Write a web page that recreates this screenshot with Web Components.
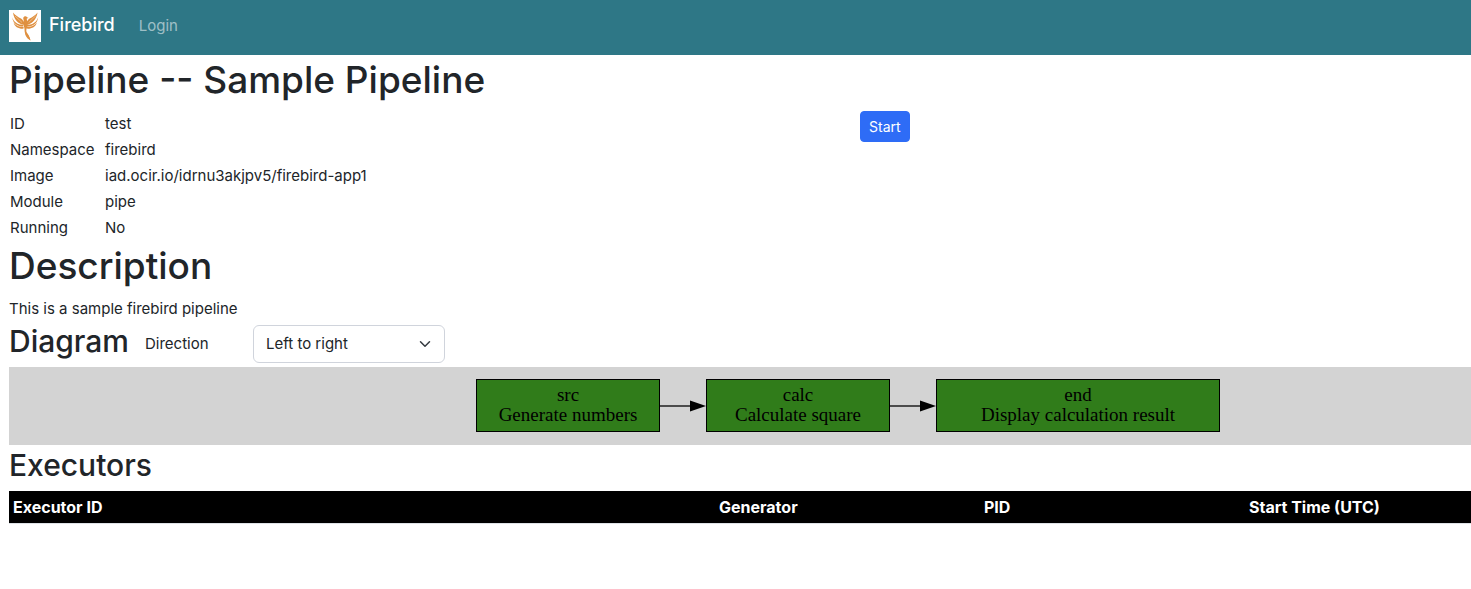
<!DOCTYPE html>
<html lang="en">
<head>
<meta charset="utf-8">
<meta name="viewport" content="width=device-width, initial-scale=1">
<title>Firebird</title>
<style>
  body {
    margin: 0;
    background: #fff;
    color: #212529;
    font-family: Inter, Roboto, "Liberation Sans", sans-serif;
    font-size: 15px;
    line-height: 24px;
  }
</style>
</head>
<body>
<fb-navbar brand="Firebird">
  <fb-nav-link href="#login">Login</fb-nav-link>
</fb-navbar>
<fb-pipeline>
  <fb-heading>Pipeline -- Sample Pipeline</fb-heading>
  <fb-details></fb-details>
  <fb-heading>Description</fb-heading>
  <fb-text>This is a sample firebird pipeline</fb-text>
  <fb-diagram-header></fb-diagram-header>
  <fb-diagram>
    <fb-node label="src" detail="Generate numbers"></fb-node>
    <fb-edge></fb-edge>
    <fb-node label="calc" detail="Calculate square"></fb-node>
    <fb-edge></fb-edge>
    <fb-node wide label="end" detail="Display calculation result"></fb-node>
  </fb-diagram>
  <fb-heading level="2">Executors</fb-heading>
  <fb-executors></fb-executors>
</fb-pipeline>

<script>
function render(host, styles, content) {
  const root = host.attachShadow({ mode: "open" });
  root.innerHTML = `<style>${styles}</style>${content}`;
  return root;
}

class FbNavbar extends HTMLElement {
  connectedCallback() {
    render(this, `
      :host { display: block; background: #2e7786; }
      nav { display: flex; align-items: center; gap: 24px; min-height: 52px; padding: 0 9px 3px; }
      .brand { display: flex; gap: 8px; color: #fff; font-size: 18px; font-weight: 500; line-height: 30px; text-decoration: none; }
      .logo { display: block; width: 32px; height: 32px; }
    `, `
      <nav>
        <a class="brand" href="#home">
          <svg class="logo" viewBox="0 0 32 32" aria-hidden="true">
            <path fill="#fff" d="M0 0h32v32H0z"/>
            <g fill="#df9040">
              <path d="M15 14.800C9 14 5 9.500 4 2.400c2.200 3.200 5.400 4.400 8 6.200 1.800 1.300 2.800 2.900 3.400 4.400z"/>
              <path d="M17.600 14.800C23 14 27.400 9.500 28.600 2.400c-2.200 3.200-5.400 4.400-8 6.200-1.800 1.300-2.800 2.900-3.400 4.400z"/>
              <path d="M3.200 7.200c1.600 4.900 5.400 7.400 11.200 7.800v1.600C8.500 16.600 4 13.500 3.200 7.200z"/>
              <path d="M29.200 7.200c-1.600 4.900-5.400 7.400-11.200 7.800v1.600c5.900 0 10.400-3.100 11.200-9.400z"/>
              <path d="M4.600 12.400c2.200 3.200 5.600 4.500 10 4.500v1.700c-5 .3-8.900-1.800-10-6.200z"/>
              <path d="M27.800 12.400c-2.200 3.200-5.600 4.500-10 4.500v1.700c5 .3 8.900-1.800 10-6.200z"/>
              <path d="M14.200 7.900c.6-1.900 3-2.400 3.900-.6l1.500.8-1.800.5c-.2 1.800.9 3.600.9 6 0 3-1.700 4.400-1.400 6.400.4 2.700 3 4.600 4.200 9.500-1.600-2.500-4.500-3.600-5.400-7-.9-2.800-.2-4.600-1-6.600-1.200-3 .3-5.400-.9-9z"/>
              <path d="M16.200 21.500c2.700 1.700 4.300 4.600 5.300 9-3-1.500-5.700-4.600-5.300-9z"/>
            </g>
            <path fill="none" stroke="#fff" stroke-opacity=".7" stroke-width=".5" d="M6 6l7 6.500M26.600 6l-7 6.500M5.500 10.500l5.500 4M27 10.500l-5.500 4"/>
          </svg>
          <span>${this.getAttribute("brand") ?? ""}</span>
        </a>
        <slot></slot>
      </nav>
    `);
  }
}

class FbNavLink extends HTMLElement {
  connectedCallback() {
    render(this, `
      :host { display: block; }
      a { color: rgba(255, 255, 255, 0.55); text-decoration: none; }
    `, `<a href="${this.getAttribute("href") ?? "#"}"><slot></slot></a>`);
  }
}

class FbPipeline extends HTMLElement {
  connectedCallback() {
    render(this, `
      :host { display: block; padding: 1px 0 0 9px; }
    `, `<main><slot></slot></main>`);
  }
}

class FbHeading extends HTMLElement {
  connectedCallback() {
    const tag = this.getAttribute("level") === "2" ? "h2" : "h1";
    render(this, `
      :host { display: block; }
      h1, h2 { margin: 0; font-weight: 500; }
      h1 { font-size: 37px; line-height: 48px; padding-bottom: 7px; }
      h2 { font-size: 30px; line-height: 38px; padding: 1px 0 7px; }
    `, `<${tag}><slot></slot></${tag}>`);
  }
}

class FbText extends HTMLElement {
  connectedCallback() {
    render(this, `
      :host { display: block; }
      p { margin: 0; }
    `, `<p><slot></slot></p>`);
  }
}

const details = [
  ["ID", "test"],
  ["Namespace", "firebird"],
  ["Image", "iad.ocir.io/idrnu3akjpv5/firebird-app1"],
  ["Module", "pipe"],
  ["Running", "No"]
];

class FbDetails extends HTMLElement {
  connectedCallback() {
    const rows = details
      .map(([name, value]) => `<tr><th scope="row">${name}</th><td>${value}</td></tr>`)
      .join("");

    render(this, `
      :host { display: grid; grid-template-columns: 7fr 5fr; align-items: start; padding: 0 3px 1px 0; }
      table { border-collapse: collapse; justify-self: start; }
      th, td { padding: 1px; text-align: left; font-weight: 400; }
      th { min-width: 93px; }
      button {
        justify-self: start;
        padding: 4px 8px;
        border: 1px solid #2e6cf6;
        border-radius: 4px;
        background: #2e6cf6;
        color: #fff;
        font: inherit;
        font-size: 14px;
        line-height: 21px;
      }
    `, `
      <table><tbody>${rows}</tbody></table>
      <button type="button">Start</button>
    `);
  }
}

class FbDiagramHeader extends HTMLElement {
  connectedCallback() {
    render(this, `
      :host { display: flex; align-items: center; padding: 4px 0; }
      h2 { margin: 0; padding-bottom: 6px; font-size: 30px; line-height: 32px; font-weight: 500; }
      label { width: 108px; margin-left: 16px; }
      .select { display: grid; align-items: center; width: 192px; }
      select, svg { grid-area: 1 / 1; }
      select {
        appearance: none;
        width: 100%;
        padding: 6px 36px 6px 12px;
        border: 1px solid #d0d4dc;
        border-radius: 6px;
        background: #fff;
        color: inherit;
        font: inherit;
        line-height: 24px;
      }
      svg { justify-self: end; width: 16px; height: 12px; margin-right: 12px; pointer-events: none; }
    `, `
      <h2>Diagram</h2>
      <label for="direction">Direction</label>
      <div class="select">
        <select id="direction">
          <option>Left to right</option>
          <option>Top to bottom</option>
        </select>
        <svg viewBox="0 0 16 16" aria-hidden="true">
          <path fill="none" stroke="#343a40" stroke-width="2" stroke-linecap="round" stroke-linejoin="round" d="m2 5 6 6 6-6"/>
        </svg>
      </div>
    `);
  }
}

class FbDiagram extends HTMLElement {
  connectedCallback() {
    render(this, `
      :host {
        display: flex;
        align-items: center;
        justify-content: center;
        padding: 12px 0 13px 216px;
        background: #d3d3d3;
      }
    `, `<slot></slot>`);
  }
}

class FbNode extends HTMLElement {
  connectedCallback() {
    render(this, `
      :host {
        display: block;
        box-sizing: border-box;
        width: 184px;
        padding: 5px 0 6px;
        border: 1px solid #000;
        background: #307c1a;
        color: #000;
        font-family: "Liberation Serif", serif;
        font-size: 19px;
        line-height: 20px;
        text-align: center;
      }
      :host([wide]) { width: 284px; }
    `, `
      <div>${this.getAttribute("label") ?? ""}</div>
      <div>${this.getAttribute("detail") ?? ""}</div>
    `);
  }
}

class FbEdge extends HTMLElement {
  connectedCallback() {
    render(this, `
      :host { display: block; }
      svg { display: block; width: 46px; height: 12px; }
    `, `
      <svg viewBox="0 0 46 12" aria-hidden="true">
        <path stroke="#000" stroke-width="1.300" d="M0 6h32"/>
        <path d="M30 .6v10.800l16-5.400z"/>
      </svg>
    `);
  }
}

class FbExecutors extends HTMLElement {
  connectedCallback() {
    render(this, `
      :host { display: block; }
      table { width: 100%; table-layout: fixed; border-collapse: collapse; }
      th { padding: 4px; background: #000; color: #fff; font-size: 16px; font-weight: 700; text-align: left; }
      thead { border-bottom: 1px solid #dee2e6; }
      .medium { width: 257px; }
      .narrow { width: 218px; }
    `, `
      <table>
        <thead>
          <tr>
            <th scope="col">Executor ID</th>
            <th scope="col" class="medium">Generator</th>
            <th scope="col" class="medium">PID</th>
            <th scope="col" class="narrow">Start Time (UTC)</th>
          </tr>
        </thead>
      </table>
    `);
  }
}

const registrations = [
  ["fb-navbar", FbNavbar],
  ["fb-nav-link", FbNavLink],
  ["fb-pipeline", FbPipeline],
  ["fb-heading", FbHeading],
  ["fb-text", FbText],
  ["fb-details", FbDetails],
  ["fb-diagram-header", FbDiagramHeader],
  ["fb-diagram", FbDiagram],
  ["fb-node", FbNode],
  ["fb-edge", FbEdge],
  ["fb-executors", FbExecutors]
];

for (const [name, element] of registrations) {
  if (!customElements.get(name)) {
    customElements.define(name, element);
  }
}
</script>
</body>
</html>
